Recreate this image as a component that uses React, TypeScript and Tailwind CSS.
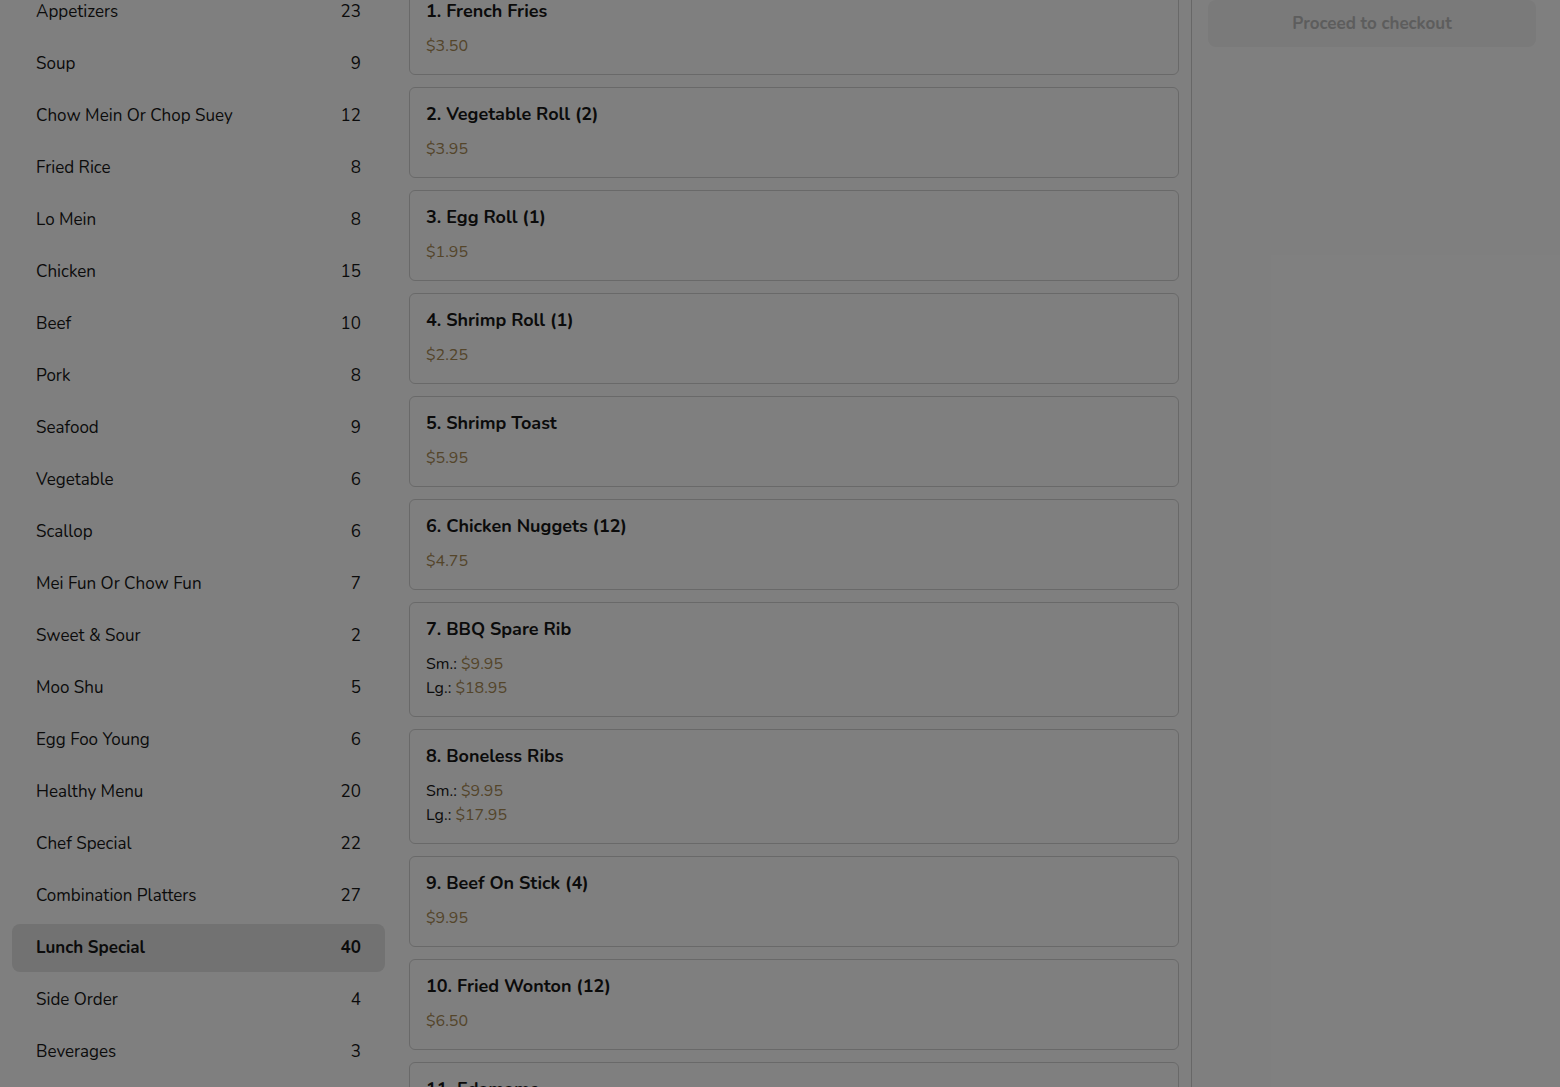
const categories: [string, number][] = [
  ["Appetizers", 23],
  ["Soup", 9],
  ["Chow Mein Or Chop Suey", 12],
  ["Fried Rice", 8],
  ["Lo Mein", 8],
  ["Chicken", 15],
  ["Beef", 10],
  ["Pork", 8],
  ["Seafood", 9],
  ["Vegetable", 6],
  ["Scallop", 6],
  ["Mei Fun Or Chow Fun", 7],
  ["Sweet & Sour", 2],
  ["Moo Shu", 5],
  ["Egg Foo Young", 6],
  ["Healthy Menu", 20],
  ["Chef Special", 22],
  ["Combination Platters", 27],
  ["Lunch Special", 40],
  ["Side Order", 4],
  ["Beverages", 3],
];

type Item = { name: string; prices: { label?: string; price: string }[] };

const items: Item[] = [
  { name: "1. French Fries", prices: [{ price: "$3.50" }] },
  { name: "2. Vegetable Roll (2)", prices: [{ price: "$3.95" }] },
  { name: "3. Egg Roll (1)", prices: [{ price: "$1.95" }] },
  { name: "4. Shrimp Roll (1)", prices: [{ price: "$2.25" }] },
  { name: "5. Shrimp Toast", prices: [{ price: "$5.95" }] },
  { name: "6. Chicken Nuggets (12)", prices: [{ price: "$4.75" }] },
  {
    name: "7. BBQ Spare Rib",
    prices: [
      { label: "Sm.:", price: "$9.95" },
      { label: "Lg.:", price: "$18.95" },
    ],
  },
  {
    name: "8. Boneless Ribs",
    prices: [
      { label: "Sm.:", price: "$9.95" },
      { label: "Lg.:", price: "$17.95" },
    ],
  },
  { name: "9. Beef On Stick (4)", prices: [{ price: "$9.95" }] },
  { name: "10. Fried Wonton (12)", prices: [{ price: "$6.50" }] },
  { name: "11. Edamame", prices: [{ price: "$4.95" }] },
];

const App = () => {
  return (
    <div
      className="relative flex h-screen overflow-hidden bg-white text-[#161616]"
      style={{ fontFamily: "Nunito, Lato, 'Noto Sans', sans-serif" }}
    >
      {/* categories */}
      <aside className="w-[397px] shrink-0 px-3">
        <ul className="-mt-[12px] flex flex-col gap-1">
          {categories.map(([name, count]) => {
            const active = name === "Lunch Special";
            return (
              <li
                key={name}
                className={`flex h-12 items-center justify-between rounded-lg px-6 text-[17px] ${
                  active ? "bg-[#e4e4e4] font-bold" : ""
                }`}
              >
                <span>{name}</span>
                <span>{count}</span>
              </li>
            );
          })}
        </ul>
      </aside>

      {/* menu items */}
      <main className="w-[794px] shrink-0 px-3">
        <div className="-mt-[16px] flex flex-col gap-3">
          {items.map((item) => (
            <div key={item.name} className="rounded-md border border-[#d2d2d2] px-4 pb-4 pt-3">
              <h3 className="text-[18px] font-bold leading-7">{item.name}</h3>
              <div className="mt-[9px] text-base leading-6">
                {item.prices.map((p, i) => (
                  <div key={i}>
                    {p.label && <span>{p.label} </span>}
                    <span className="text-[#a88a55]">{p.price}</span>
                  </div>
                ))}
              </div>
            </div>
          ))}
        </div>
      </main>

      {/* cart */}
      <aside className="flex-1 border-l border-[#cfcfcf] pl-4 pr-6">
        <button className="h-[47px] w-full rounded-lg bg-[#f4f4f4] text-[17px] font-bold text-[#bbbbbb]">
          Proceed to checkout
        </button>
      </aside>

      <div className="absolute inset-0 bg-black/50" />
    </div>
  );
};

export default App;
